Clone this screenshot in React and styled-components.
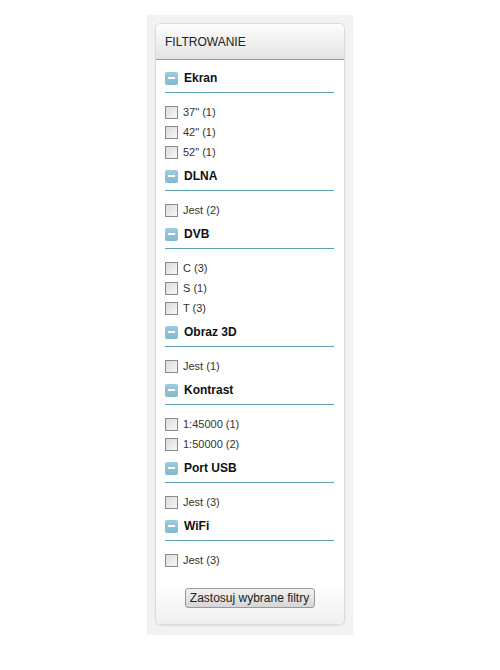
import styled, { createGlobalStyle } from "styled-components";

const Global = createGlobalStyle`
    body {
        margin: 0;
        background: #fff;
        font-family: "Liberation Sans", Arial, sans-serif;
    }
`

const Wrapper = styled.div`
    width: 206px;
    margin: 15px 0 0 147px;
    padding: 8px 8px 10px;
    box-sizing: border-box;
    background: #f2f2f2;
`

const Card = styled.div`
    background: #fff;
    border: 1px solid #dadada;
    border-radius: 6px;
    box-shadow: 0 1px 2px rgba(0,0,0,0.08);
    overflow: hidden;
`

const Header = styled.div`
    height: 35px;
    line-height: 36px;
    padding-left: 9px;
    font-size: 12px;
    color: #222;
    background: linear-gradient(#fdfdfd, #e3e3e3);
    border-bottom: 1px solid #6aa7bc;
`

const Body = styled.div`
    padding: 10px 10px 16px 9px;
    background: linear-gradient(to bottom, #fff 0%, #fff 93%, #efefef 100%);
`

const Section = styled.div`
    margin-bottom: 6px;
`

const Title = styled.div`
    display: flex;
    align-items: center;
    gap: 6px;
    height: 16px;
    padding-bottom: 6px;
    border-bottom: 1px solid #5b9fb6;
    font-size: 12px;
    font-weight: 700;
    color: #111;
`

const Toggle = styled.span`
    width: 13px;
    height: 13px;
    border-radius: 2px;
    background: linear-gradient(#9ccbdd, #82b9cf);
    display: flex;
    align-items: center;
    justify-content: center;

    &::after {
        content: "";
        width: 7px;
        height: 2px;
        background: #fff;
    }
`

const List = styled.ul`
    list-style: none;
    margin: 0;
    padding: 9px 0 0;
`

const Item = styled.li`
    display: flex;
    align-items: center;
    gap: 5px;
    height: 20px;
    font-size: 11px;
    color: #333;
`

const Box = styled.span`
    width: 11px;
    height: 11px;
    border: 1px solid #8a8a8a;
    background: linear-gradient(135deg, #dcdcdc, #f6f6f6);
`

const Actions = styled.div`
    display: flex;
    justify-content: center;
    padding-top: 12px;
`

const Button = styled.button`
    width: 130px;
    height: 20px;
    padding: 0;
    font-family: "Liberation Sans", Arial, sans-serif;
    font-size: 12px;
    color: #222;
    border: 1px solid #9a9a9a;
    border-radius: 3px;
    background: linear-gradient(#f2f2f2, #d6d6d6);
`

const filters = [
    { name: "Ekran", items: ["37\" (1)", "42\" (1)", "52\" (1)"] },
    { name: "DLNA", items: ["Jest (2)"] },
    { name: "DVB", items: ["C (3)", "S (1)", "T (3)"] },
    { name: "Obraz 3D", items: ["Jest (1)"] },
    { name: "Kontrast", items: ["1:45000 (1)", "1:50000 (2)"] },
    { name: "Port USB", items: ["Jest (3)"] },
    { name: "WiFi", items: ["Jest (3)"] },
]

const App = () => {
    return (
        <>
            <Global />
            <Wrapper>
                <Card>
                    <Header>FILTROWANIE</Header>
                    <Body>
                        {filters.map((f) => (
                            <Section key={f.name}>
                                <Title><Toggle />{f.name}</Title>
                                <List>
                                    {f.items.map((label) => (
                                        <Item key={label}><Box />{label}</Item>
                                    ))}
                                </List>
                            </Section>
                        ))}
                        <Actions>
                            <Button>Zastosuj wybrane filtry</Button>
                        </Actions>
                    </Body>
                </Card>
            </Wrapper>
        </>
    );
}

export default App;
